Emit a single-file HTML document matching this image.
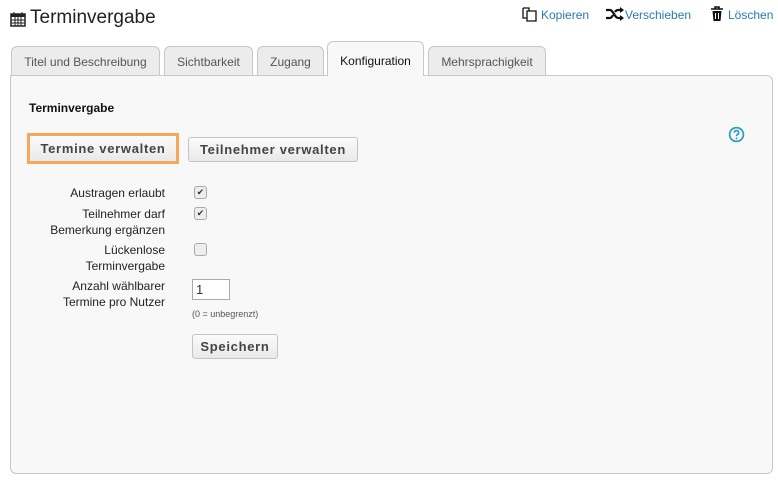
<!DOCTYPE html>
<html><head><meta charset="utf-8"><style>
body{margin:0;background:#fff;font-family:"Liberation Sans",sans-serif;font-size:12px;color:#222;width:778px;height:480px;position:relative;overflow:hidden}
.a{position:absolute}
.tab{position:absolute;top:46px;height:29px;background:#ececec;border:1px solid #c8c8c8;border-bottom:none;border-radius:6px 6px 0 0;color:#555;font-size:12px;line-height:30px;text-align:center;box-sizing:border-box}
.panel{position:absolute;left:10px;top:75px;width:763px;height:399px;background:#f8f8f8;border:1px solid #c8c8c8;border-radius:0 6px 6px 6px;box-sizing:border-box}
.btn{position:absolute;background:linear-gradient(#fbfbfb,#e9e9e9);border:1px solid #c4c4c4;border-radius:3px;font-weight:bold;color:#444;font-size:13px;letter-spacing:0.7px;text-align:center;box-sizing:border-box}
.lbl{position:absolute;right:613px;text-align:right;line-height:16px}
.cb{position:absolute;left:194px;width:11px;height:11px;border:1px solid #aaa;border-radius:3px;background:#eee;font-size:9px;line-height:11px;text-align:center;color:#333}
.lnk{color:#2a7ab0;font-size:12px}
</style></head><body>
<svg class="a" style="left:10px;top:11px" width="16" height="16" viewBox="0 0 16 16"><rect x="1" y="3" width="14" height="12" fill="none" stroke="#222" stroke-width="1.5"/><rect x="1" y="3" width="14" height="3" fill="#222"/><path d="M4 1v3M12 1v3M1 9h14M1 12h14M5 6v9M8 6v9M11 6v9" stroke="#222" stroke-width="1"/></svg>
<div class="a" style="left:30px;top:7px;font-size:19px;color:#222">Terminvergabe</div>
<svg class="a" style="left:522px;top:6px" width="16" height="16" viewBox="0 0 16 16"><path d="M1 2h6v3M1 2v10h4" fill="none" stroke="#111" stroke-width="1.3"/><path d="M5 5h9v10H5z" fill="#fff" stroke="#111" stroke-width="1.3"/></svg>
<div class="a lnk" style="left:541px;top:8px">Kopieren</div>
<svg class="a" style="left:606px;top:7px" width="18" height="14" viewBox="0 0 18 14"><path d="M0 3h4c3 0 5 8 8 8h3M0 11h4c1.5 0 2.5-2 3-3M9 5c.8-1.2 1.8-2 3-2h3" fill="none" stroke="#111" stroke-width="2.2"/><path d="M14 0l4 3-4 3zM14 8l4 3-4 3z" fill="#111"/></svg>
<div class="a lnk" style="left:625px;top:8px">Verschieben</div>
<svg class="a" style="left:710px;top:6px" width="14" height="16" viewBox="0 0 14 16"><path d="M1 3h12M5 3V1h4v2" stroke="#111" stroke-width="1.6" fill="none"/><path d="M2.5 5h9l-1 10h-7z" fill="#111"/><path d="M5.5 7v6M8.5 7v6" stroke="#fff" stroke-width="1"/></svg>
<div class="a lnk" style="left:728px;top:8px">Löschen</div>
<div class="tab" style="left:11px;width:149px">Titel und Beschreibung</div>
<div class="tab" style="left:164px;width:89px">Sichtbarkeit</div>
<div class="tab" style="left:257px;width:67px">Zugang</div>
<div class="tab" style="left:428px;width:118px">Mehrsprachigkeit</div>
<div class="panel"></div>
<div class="tab" style="left:327px;top:41px;height:35px;width:97px;background:#f8f8f8;color:#111;line-height:38px">Konfiguration</div>
<div class="a" style="left:29px;top:101px;font-weight:bold;color:#111">Terminvergabe</div>
<div class="a" style="left:27px;top:133px;width:152px;height:31px;border:3px solid #f7a75a;box-sizing:border-box"></div>
<div class="btn" style="left:30px;top:136px;width:146px;height:25px;border:none;line-height:25px">Termine verwalten</div>
<div class="btn" style="left:188px;top:137px;width:170px;height:25px;line-height:23px">Teilnehmer verwalten</div>
<svg class="a" style="left:728px;top:126px" width="17" height="17" viewBox="0 0 16 16"><circle cx="8" cy="8" r="6.5" fill="none" stroke="#2a9bc4" stroke-width="1.6"/><path d="M6 6.3a2 2 0 1 1 2.8 1.8c-.6.3-.8.7-.8 1.4" fill="none" stroke="#2a9bc4" stroke-width="1.5"/><circle cx="8" cy="11.6" r=".9" fill="#2a9bc4"/></svg>
<div class="lbl" style="top:185px">Austragen erlaubt</div>
<div class="cb" style="top:186px">✔</div>
<div class="lbl" style="top:206px">Teilnehmer darf<br>Bemerkung ergänzen</div>
<div class="cb" style="top:207px">✔</div>
<div class="lbl" style="top:242px">Lückenlose<br>Terminvergabe</div>
<div class="cb" style="top:243px"></div>
<div class="lbl" style="top:278px">Anzahl wählbarer<br>Termine pro Nutzer</div>
<div class="a" style="left:192px;top:279px;width:38px;height:21px;border:1px solid #aaa;background:#fff;box-sizing:border-box;font-size:13px;line-height:19px;padding-left:3px;color:#333">1</div>
<div class="a" style="left:192px;top:309px;font-size:9px;color:#555">(0 = unbegrenzt)</div>
<div class="btn" style="left:192px;top:334px;width:86px;height:25px;line-height:23px">Speichern</div>
</body></html>
